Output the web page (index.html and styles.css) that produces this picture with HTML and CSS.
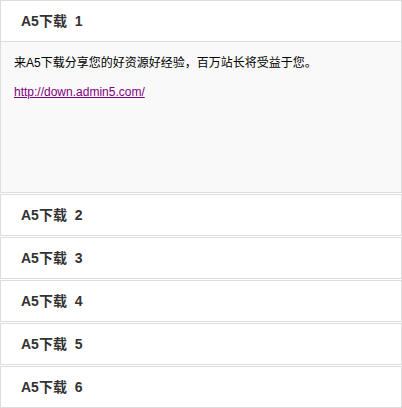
FILE: index.html
```html
<!DOCTYPE html>
<html lang="zh">
<head>
  <meta charset="UTF-8" />
  <title>A5下载</title>
  <link rel="stylesheet" href="styles.css">
</head>
<body>
  <div class="accordion">
    <div class="item open">
      <div class="item-head">A5下载&nbsp;&nbsp;1</div>
      <div class="item-body">
        <p>来A5下载分享您的好资源好经验，百万站长将受益于您。</p>
        <p><a href="http://down.admin5.com/">http://down.admin5.com/</a></p>
      </div>
    </div>
    <div class="item"><div class="item-head">A5下载&nbsp;&nbsp;2</div></div>
    <div class="item"><div class="item-head">A5下载&nbsp;&nbsp;3</div></div>
    <div class="item"><div class="item-head">A5下载&nbsp;&nbsp;4</div></div>
    <div class="item"><div class="item-head">A5下载&nbsp;&nbsp;5</div></div>
    <div class="item"><div class="item-head">A5下载&nbsp;&nbsp;6</div></div>
  </div>
</body>
</html>
```

FILE: styles.css
```css
body { margin: 0; background: #fff; font-family: "Liberation Sans", Arial, "Noto Sans CJK SC", sans-serif; color: #333; }
.accordion { width: 402px; }
.item { border: 1px solid #ddd; margin-bottom: 1px; }
.item-head {
  height: 40px;
  line-height: 40px;
  padding-left: 20px;
  font-size: 14px;
  font-weight: bold;
  color: #333;
  background: #fff;
}
.item.open .item-head { border-bottom: 1px solid #ddd; }
.item-body {
  height: 150px;
  box-sizing: border-box;
  padding: 12px 13px;
  background: #f9f9f9;
  font-size: 12px;
  color: #000;
}
.item-body p { margin: 0 0 11px; line-height: 18px; }
.item-body a { color: #800080; }
```
